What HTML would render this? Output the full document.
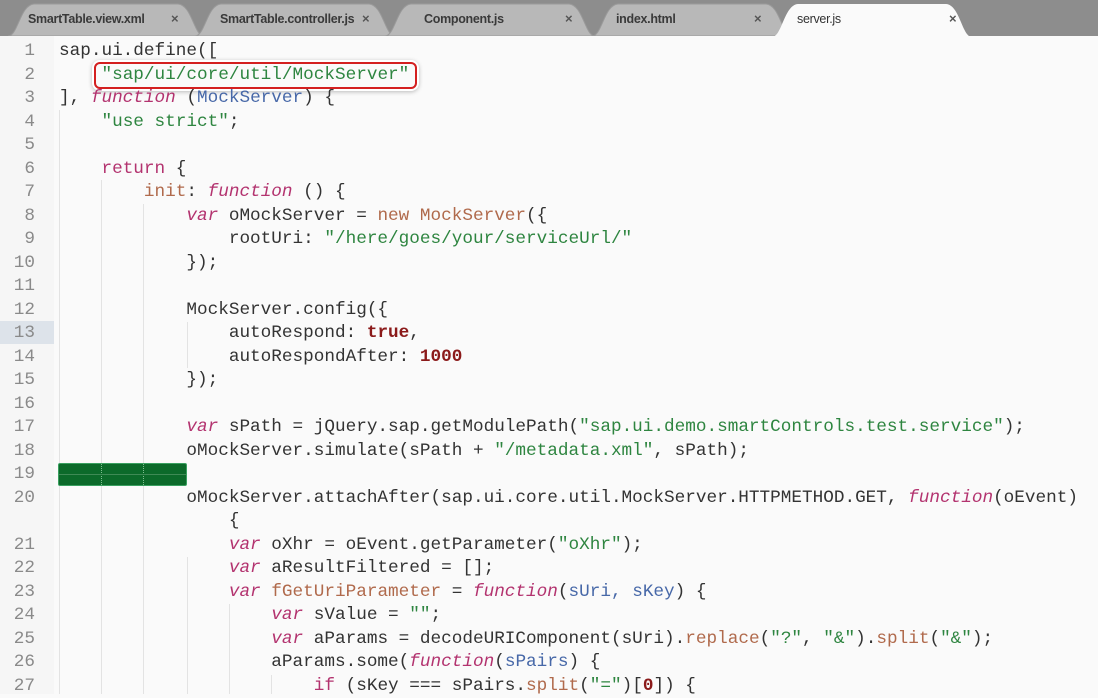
<!DOCTYPE html>
<html><head><meta charset="utf-8"><style>
html,body{margin:0;padding:0;width:1098px;height:694px;overflow:hidden;background:#fafafa;}
#bar{position:absolute;left:0;top:0;width:1098px;height:36px;background:#8d8d8d;}
.tab{position:absolute;top:3px;height:33px;}
.tab svg{position:absolute;left:0;top:0;}
.tab .t{position:absolute;top:9px;font:bold 12.5px "Liberation Sans",sans-serif;color:#3a3a3a;letter-spacing:-0.3px;}
.tab .x{position:absolute;top:8px;font:bold 13px "Liberation Sans",sans-serif;color:#555;}
#gut{position:absolute;left:0;top:36px;width:54px;height:658px;background:#f6f6f6;}
#code{position:absolute;left:0;top:40px;width:1098px;font:17.7px/23.5px "Liberation Mono",monospace;color:#333;}
.r{height:23.5px;position:relative;white-space:pre;}
.n{position:absolute;left:0;width:35px;text-align:right;color:#8a8a8a;}
.c{position:absolute;left:59px;}
.s{color:#2e8540}.k{color:#b3336f;font-style:italic}.p{color:#4768a8}.o{color:#b06a4c}.b{color:#8b1a1a;font-weight:bold}
.g{position:absolute;width:1px;background:#e3e3e3;}
</style></head><body>
<div id="bar"></div>
<div class="tab" style="left:8px;width:196px"><svg width="196" height="33"><path d="M0 33 C10 33 12 2 26 1 L170 1 C184 2 186 33 196 33Z" fill="#b8b8b8" stroke="#9a9a9a"/></svg><span class="t" style="left:20px">SmartTable.view.xml</span><span class="x" style="left:163px">×</span></div>
<div class="tab" style="left:195px;width:200px"><svg width="200" height="33"><path d="M0 33 C10 33 12 2 26 1 L174 1 C188 2 190 33 200 33Z" fill="#b8b8b8" stroke="#9a9a9a"/></svg><span class="t" style="left:25px">SmartTable.controller.js</span><span class="x" style="left:167px">×</span></div>
<div class="tab" style="left:385px;width:210px"><svg width="210" height="33"><path d="M0 33 C10 33 12 2 26 1 L184 1 C198 2 200 33 210 33Z" fill="#b8b8b8" stroke="#9a9a9a"/></svg><span class="t" style="left:39px">Component.js</span><span class="x" style="left:180px">×</span></div>
<div class="tab" style="left:592px;width:200px"><svg width="200" height="33"><path d="M0 33 C10 33 12 2 26 1 L174 1 C188 2 190 33 200 33Z" fill="#b8b8b8" stroke="#9a9a9a"/></svg><span class="t" style="left:24px">index.html</span><span class="x" style="left:162px">×</span></div>
<div class="tab" style="left:772px;width:200px"><svg width="200" height="34"><path d="M0 34 C10 34 12 2 26 1 L174 1 C188 2 190 34 200 34Z" fill="#fafafa"/></svg><span class="t" style="left:25px;font-weight:normal;color:#333">server.js</span><span class="x" style="left:177px">×</span></div>
<div id="gut"></div>
<div style="position:absolute;left:0;top:321px;width:54px;height:23px;background:#dde3ea"></div>
<div class="g" style="left:59px;top:110px;height:584px"></div>
<div class="g" style="left:101px;top:180px;height:514px"></div>
<div class="g" style="left:143px;top:204px;height:490px"></div>
<div class="g" style="left:187px;top:322px;height:46px"></div>
<div class="g" style="left:187px;top:557px;height:137px"></div>
<div class="g" style="left:229px;top:604px;height:90px"></div>
<div class="g" style="left:271px;top:675px;height:19px"></div>
<div style="position:absolute;left:58px;top:463px;width:129px;height:23px;background:#0c6a2a;border-radius:2px;border:1px solid #3aa060;box-sizing:border-box"></div>
<div style="position:absolute;left:101px;top:464px;width:0;height:21px;border-left:1px dotted #7fbf90"></div>
<div style="position:absolute;left:143px;top:464px;width:0;height:21px;border-left:1px dotted #7fbf90"></div>
<div style="position:absolute;left:59px;top:474px;width:127px;height:1px;background:#3f8a55"></div>
<div style="position:absolute;left:94px;top:62px;width:323px;height:27px;border:2px solid #d42020;border-radius:6px;box-sizing:border-box;box-shadow:0 0 0 2px #fff,0 1px 4px 2px rgba(0,0,0,.25)"></div>
<div id="code"><div class="r"><span class="n">1</span><span class="c">sap.ui.define([</span></div><div class="r"><span class="n">2</span><span class="c">    <span class="s">"sap/ui/core/util/MockServer"</span></span></div><div class="r"><span class="n">3</span><span class="c">], <span class="k">function</span> (<span class="p">MockServer</span>) {</span></div><div class="r"><span class="n">4</span><span class="c">    <span class="s">"use strict"</span>;</span></div><div class="r"><span class="n">5</span><span class="c"></span></div><div class="r"><span class="n">6</span><span class="c">    <span class="k" style="font-style:normal">return</span> {</span></div><div class="r"><span class="n">7</span><span class="c">        <span class="o">init</span>: <span class="k">function</span> () {</span></div><div class="r"><span class="n">8</span><span class="c">            <span class="k">var</span> oMockServer = <span class="o">new MockServer</span>({</span></div><div class="r"><span class="n">9</span><span class="c">                rootUri: <span class="s">"/here/goes/your/serviceUrl/"</span></span></div><div class="r"><span class="n">10</span><span class="c">            });</span></div><div class="r"><span class="n">11</span><span class="c"></span></div><div class="r"><span class="n">12</span><span class="c">            MockServer.config({</span></div><div class="r"><span class="n">13</span><span class="c">                autoRespond: <span class="b">true</span>,</span></div><div class="r"><span class="n">14</span><span class="c">                autoRespondAfter: <span class="b">1000</span></span></div><div class="r"><span class="n">15</span><span class="c">            });</span></div><div class="r"><span class="n">16</span><span class="c"></span></div><div class="r"><span class="n">17</span><span class="c">            <span class="k">var</span> sPath = jQuery.sap.getModulePath(<span class="s">"sap.ui.demo.smartControls.test.service"</span>);</span></div><div class="r"><span class="n">18</span><span class="c">            oMockServer.simulate(sPath + <span class="s">"/metadata.xml"</span>, sPath);</span></div><div class="r"><span class="n">19</span><span class="c"></span></div><div class="r"><span class="n">20</span><span class="c">            oMockServer.attachAfter(sap.ui.core.util.MockServer.HTTPMETHOD.GET, <span class="k">function</span>(oEvent)</span></div><div class="r"><span class="c">                {</span></div><div class="r"><span class="n">21</span><span class="c">                <span class="k">var</span> oXhr = oEvent.getParameter(<span class="s">"oXhr"</span>);</span></div><div class="r"><span class="n">22</span><span class="c">                <span class="k">var</span> aResultFiltered = [];</span></div><div class="r"><span class="n">23</span><span class="c">                <span class="k">var</span> <span class="o">fGetUriParameter</span> = <span class="k">function</span>(<span class="p">sUri, sKey</span>) {</span></div><div class="r"><span class="n">24</span><span class="c">                    <span class="k">var</span> sValue = <span class="s">""</span>;</span></div><div class="r"><span class="n">25</span><span class="c">                    <span class="k">var</span> aParams = decodeURIComponent(sUri).<span class="o">replace</span>(<span class="s">"?"</span>, <span class="s">"&amp;"</span>).<span class="o">split</span>(<span class="s">"&amp;"</span>);</span></div><div class="r"><span class="n">26</span><span class="c">                    aParams.some(<span class="k">function</span>(<span class="p">sPairs</span>) {</span></div><div class="r"><span class="n">27</span><span class="c">                        <span class="k" style="font-style:normal">if</span> (sKey === sPairs.<span class="o">split</span>(<span class="s">"="</span>)[<span class="b">0</span>]) {</span></div></div>
</body></html>
